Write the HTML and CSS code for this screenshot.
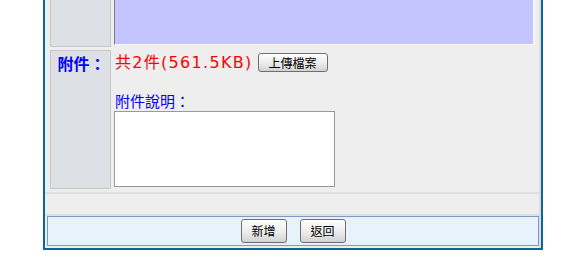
FILE: index.html
```html
<!DOCTYPE html>
<html lang="zh-Hant">
<head>
  <meta charset="UTF-8" />
  <title>附件</title>
  <link rel="stylesheet" href="styles.css">
</head>
<body>
  <div class="frame">
    <div class="inner">
      <!-- form rows -->
      <div class="form">
        <div class="label label-top"></div>
        <div class="field">
          <div class="content-box"></div>
        </div>

        <div class="label"><span class="label-text">附件：</span></div>
        <div class="field field-attach">
          <div class="attach-line">
            <span class="count">共2件(561.5KB)</span>
            <button class="btn btn-upload">上傳檔案</button>
          </div>
          <div class="note-label">附件說明：</div>
          <textarea class="note"></textarea>
        </div>
      </div>

      <div class="sep"></div>
      <div class="spacer"></div>
      <div class="sep"></div>

      <!-- action bar -->
      <div class="actions-wrap">
        <div class="actions">
          <button class="btn btn-action">新增</button>
          <button class="btn btn-action">返回</button>
        </div>
      </div>
    </div>
  </div>
</body>
</html>
```

FILE: styles.css
```css
* {
  box-sizing: border-box;
}

body {
  margin: 0;
  background: #fff;
  font-family: "Noto Sans CJK TC", sans-serif;
}

.frame {
  width: 500px;
  margin: -62px 0 0 43px;
  border: 2px solid #0b6797;
  background: #eeeeee;
}

.inner {
  border-right: 2px solid #dcdcdc;
  padding-bottom: 2px;
}

.form {
  display: grid;
  grid-template-columns: 61px 1fr;
  column-gap: 3px;
  row-gap: 3px;
  padding: 3px 4px 3px 5px;
}

.label {
  background: #dde1e5;
  border: 1px solid #c8c8c8;
  text-align: center;
}

.label-top {
  height: 104px;
}

.label-text {
  display: block;
  margin-top: 2px;
  padding-left: 2px;
  color: #0000ff;
  font-weight: bold;
  font-size: 16px;
  line-height: 20px;
}

.content-box {
  height: 102px;
  background: #c4c4ff;
  border-left: 1px solid #808080;
  border-bottom: 1px solid #f6f6f6;
  border-right: 2px solid #f6f6f6;
}

.field-attach {
  padding: 3px 0 2px 0;
}

.attach-line {
  display: flex;
  align-items: center;
  height: 19px;
  gap: 5px;
}

.count {
  color: #ff0000;
  font-family: "DejaVu Sans", "Noto Sans CJK TC", sans-serif;
  font-size: 16px;
  letter-spacing: 1.3px;
  padding-left: 1px;
  line-height: 19px;
}

.note-label {
  margin-top: 19px;
  color: #0000ff;
  font-size: 15px;
  line-height: 19px;
  padding-left: 1px;
}

.note {
  display: block;
  margin: 1px 0 0 0;
  width: 221px;
  height: 76px;
  border: 1px solid #999;
  background: #fff;
  resize: none;
  padding: 0;
}

.sep {
  height: 2px;
  background: #dce0e4;
}

.spacer {
  height: 20px;
}

.actions-wrap {
  padding: 0 0 0 2px;
}

.actions {
  height: 30px;
  border: 1px solid #7b9bc6;
  background: #e8f2fc;
  display: flex;
  justify-content: center;
  align-items: center;
  gap: 13px;
}

.btn {
  font-family: "Noto Sans CJK TC", sans-serif;
  font-size: 12px;
  color: #000;
  border: 1px solid #6f6f6f;
  border-radius: 3px;
  background: linear-gradient(#fefefe, #ececec 55%, #d2d2d2);
  padding: 0;
  line-height: 1;
  cursor: pointer;
}

.btn-upload {
  width: 70px;
  height: 19px;
}

.btn-action {
  width: 46px;
  height: 24px;
}
```
